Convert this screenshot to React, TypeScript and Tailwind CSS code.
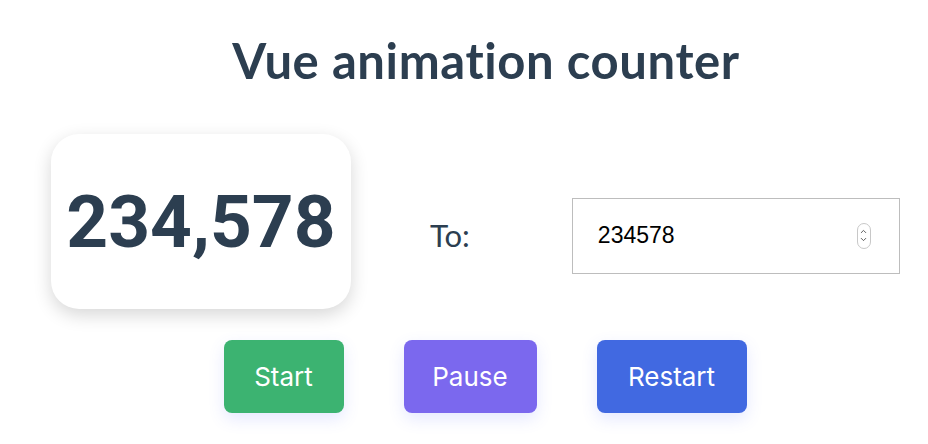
import { ChevronUp, ChevronDown } from 'lucide-react';

export default function App() {
  return (
    <div className="w-[928px] h-[444px] bg-white overflow-hidden font-['Lato',sans-serif] text-[#2c3e50]">
      <h1 className="pt-[28px] pl-[44px] text-center text-[49px] leading-[64px] font-bold tracking-[0.6px]">
        Vue animation counter
      </h1>

      <div className="flex items-center mt-[42px] pl-[51px]">
        <div className="w-[300px] h-[175px] rounded-[28px] bg-white shadow-[0_6px_18px_rgba(0,0,0,0.16)] flex items-center justify-center">
          <span className="font-['Roboto',sans-serif] font-bold text-[73px] leading-none pt-[2px]">
            234,578
          </span>
        </div>
        <span className="ml-[79px] mt-[28px] text-[31px] font-['Lato',sans-serif]">To:</span>
        <div className="ml-[102px] mt-[28px] w-[328px] h-[76px] border border-[#bdbdbd] flex items-center pl-[25px] pr-[28px]">
          <span className="flex-1 font-['Liberation_Sans',sans-serif] text-[23px] text-black">234578</span>
          <div className="w-[14px] h-[26px] rounded-full border border-[#c8c8c8] flex flex-col items-center justify-center text-[#555]">
            <ChevronUp className="w-[9px] h-[9px] -mb-[1px]" strokeWidth={2.5} />
            <ChevronDown className="w-[9px] h-[9px]" strokeWidth={2.5} />
          </div>
        </div>
      </div>

      <div className="flex justify-center gap-[60px] mt-[31px] pl-[42px] font-['Inter',sans-serif] text-[26px] text-white">
        <button className="w-[120px] h-[73px] rounded-[8px] bg-[#3cb371] shadow-[0_6px_16px_rgba(80,100,255,0.15)]">
          Start
        </button>
        <button className="w-[133px] h-[73px] rounded-[8px] bg-[#7b68ee] shadow-[0_6px_16px_rgba(80,100,255,0.15)]">
          Pause
        </button>
        <button className="w-[150px] h-[73px] rounded-[8px] bg-[#4169e1] shadow-[0_6px_16px_rgba(80,100,255,0.15)]">
          Restart
        </button>
      </div>
    </div>
  );
}
